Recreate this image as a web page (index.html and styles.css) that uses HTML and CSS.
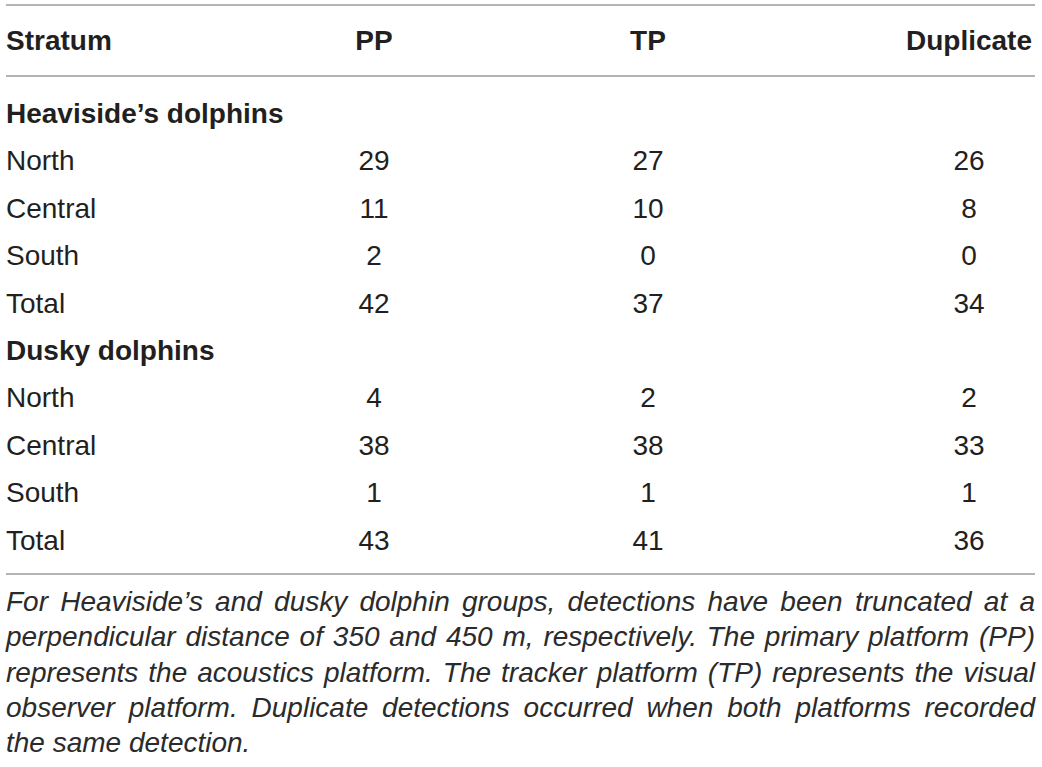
FILE: index.html
```html
<!DOCTYPE html>
<html lang="en">
<head>
    <meta charset="UTF-8">
    <meta name="viewport" content="width=device-width, initial-scale=1.0">
    <title>Detections by stratum</title>
    <link rel="stylesheet" href="styles.css">
</head>
<body>
    <div class="table-wrap">
        <table class="detections">
            <colgroup>
                <col class="col-stratum">
                <col class="col-pp">
                <col class="col-tp">
                <col class="col-dup">
            </colgroup>
            <thead>
                <tr>
                    <th class="left">Stratum</th>
                    <th>PP</th>
                    <th>TP</th>
                    <th class="dup">Duplicate</th>
                </tr>
            </thead>
            <tbody>
                <tr class="first"><td class="section" colspan="4">Heaviside’s dolphins</td></tr>
                <tr><td class="left">North</td><td>29</td><td>27</td><td class="dup">26</td></tr>
                <tr><td class="left">Central</td><td>11</td><td>10</td><td class="dup">8</td></tr>
                <tr><td class="left">South</td><td>2</td><td>0</td><td class="dup">0</td></tr>
                <tr><td class="left">Total</td><td>42</td><td>37</td><td class="dup">34</td></tr>
                <tr><td class="section" colspan="4">Dusky dolphins</td></tr>
                <tr><td class="left">North</td><td>4</td><td>2</td><td class="dup">2</td></tr>
                <tr><td class="left">Central</td><td>38</td><td>38</td><td class="dup">33</td></tr>
                <tr><td class="left">South</td><td>1</td><td>1</td><td class="dup">1</td></tr>
                <tr class="last"><td class="left">Total</td><td>43</td><td>41</td><td class="dup">36</td></tr>
            </tbody>
        </table>

        <p class="caption">
            <span class="line">For Heaviside’s and dusky dolphin groups, detections have been truncated at a</span>
            <span class="line">perpendicular distance of 350 and 450 m, respectively. The primary platform (PP)</span>
            <span class="line">represents the acoustics platform. The tracker platform (TP) represents the visual</span>
            <span class="line">observer platform. Duplicate detections occurred when both platforms recorded</span>
            <span class="line end">the same detection.</span>
        </p>
    </div>
</body>
</html>
```

FILE: styles.css
```css
body {
    margin: 0;
    padding: 0;
    background: #fff;
    color: #231f20;
    font-family: "Liberation Sans", Arial, sans-serif;
    font-size: 28px;
}

.table-wrap {
    width: 1029px;
    margin: 0 0 0 6px;
    padding-top: 4px;
}

.detections {
    width: 100%;
    border-collapse: collapse;
    table-layout: fixed;
}

.col-stratum { width: 232px; }
.col-pp { width: 272px; }
.col-tp { width: 276px; }
.col-dup { width: 249px; }

.detections thead th {
    border-top: 2px solid #b4b4b4;
    border-bottom: 2px solid #b4b4b4;
    height: 69px;
    padding: 0;
    font-weight: bold;
    text-align: center;
    line-height: 1;
    vertical-align: middle;
}

.detections td {
    height: 47.4px;
    padding: 0;
    line-height: 47.4px;
    text-align: center;
    font-weight: normal;
    white-space: nowrap;
}

.detections tr.first td {
    padding-top: 13px;
}

.detections tr.last td {
    padding-bottom: 9px;
    border-bottom: 2px solid #b4b4b4;
}

.detections .left {
    text-align: left;
}

.detections .dup {
    padding-left: 117px;
}

.detections td.section {
    text-align: left;
    font-weight: bold;
}

.caption {
    margin: 9px 0 0;
    font-style: italic;
    color: #2b2b2b;
    line-height: 35.3px;
}

.caption .line {
    display: block;
    text-align: justify;
    text-align-last: justify;
}

.caption .line.end {
    text-align-last: left;
}
```
